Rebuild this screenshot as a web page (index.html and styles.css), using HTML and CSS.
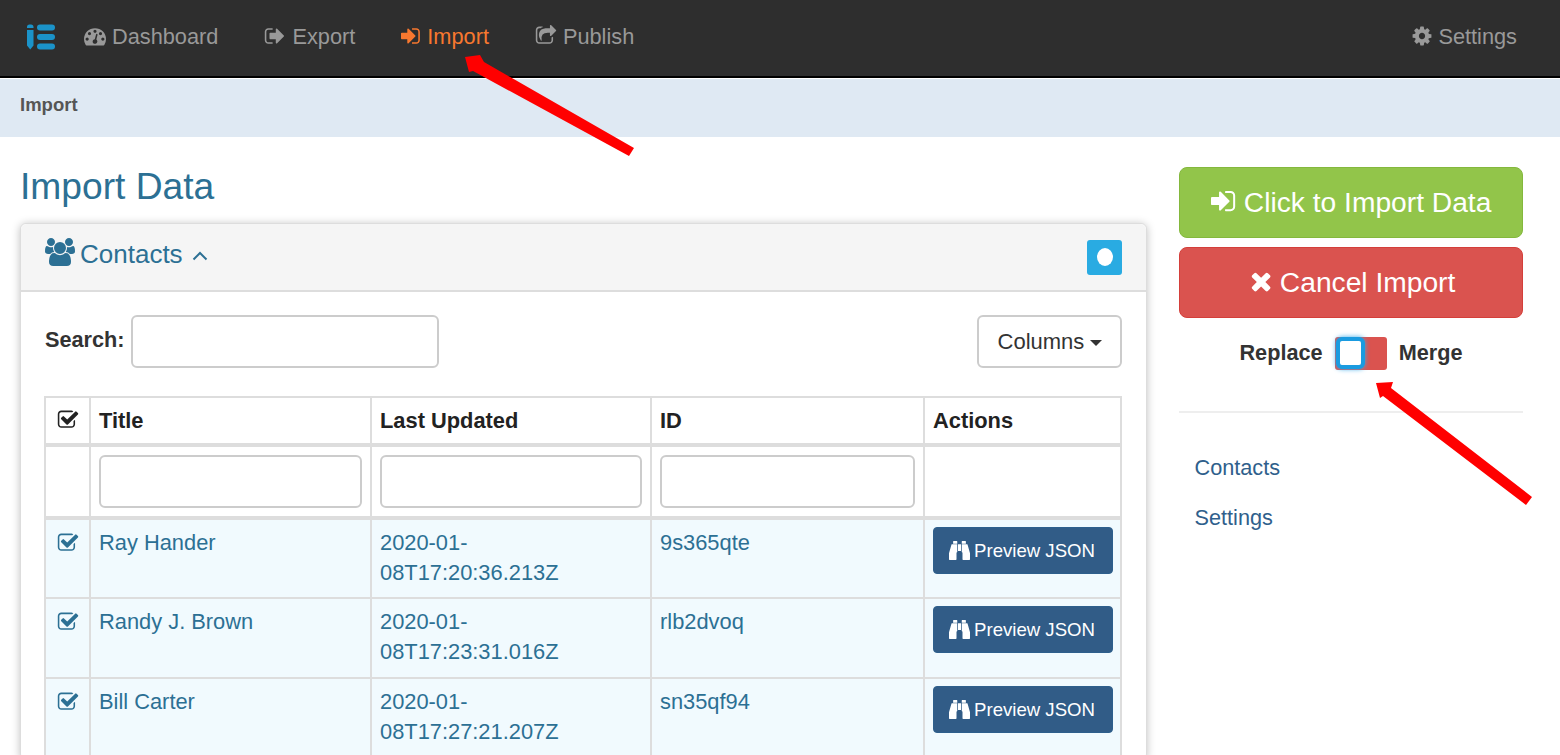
FILE: index.html
```html
<!DOCTYPE html>
<html lang="en">
<head>
  <meta charset="utf-8">
  <title>Import Data</title>
  <link rel="stylesheet" href="styles.css">
</head>
<body>
  <svg class="sprite" xmlns="http://www.w3.org/2000/svg">
    <symbol id="i-in" viewBox="0 0 1792 1792"><path d="M1184 896q0 26-19 45l-544 544q-19 19-45 19t-45-19-19-45v-288h-448q-26 0-45-19t-19-45v-384q0-26 19-45t45-19h448v-288q0-26 19-45t45-19 45 19l544 544q19 19 19 45zm352-352v704q0 119-84.5 203.5t-203.5 84.5h-320q-13 0-22.5-9.5t-9.5-22.5q0-4-1-20t-.5-26.5 3-23.5 10-19.5 20.5-6.5h320q66 0 113-47t47-113v-704q0-66-47-113t-113-47h-312l-11.5-1-11.5-3-8-5.5-7-9-2-13.5q0-4-1-20t-.5-26.5 3-23.5 10-19.5 20.5-6.5h320q119 0 203.5 84.5t84.5 203.5z"/></symbol>
    <symbol id="i-out" viewBox="0 0 1792 1792"><path d="M704 1440q0 4 1 20t.5 26.5-3 23.5-10 19.5-20.5 6.5h-320q-119 0-203.5-84.5t-84.5-203.5v-704q0-119 84.5-203.5t203.5-84.5h320q13 0 22.5 9.5t9.5 22.5q0 4 1 20t.5 26.5-3 23.5-10 19.5-20.5 6.5h-320q-66 0-113 47t-47 113v704q0 66 47 113t113 47h312l11.5 1 11.5 3 8 5.5 7 9 2 13.5zm928-544q0 26-19 45l-544 544q-19 19-45 19t-45-19-19-45v-288h-448q-26 0-45-19t-19-45v-384q0-26 19-45t45-19h448v-288q0-26 19-45t45-19 45 19l544 544q19 19 19 45z"/></symbol>
    <symbol id="i-cog" viewBox="0 0 1792 1792"><path d="M1152 896q0-106-75-181t-181-75-181 75-75 181 75 181 181 75 181-75 75-181zm512-109v222q0 12-8 23t-20 13l-185 28q-19 54-39 91 35 50 107 138 10 12 10 25t-9 23q-27 37-99 108t-94 71q-12 0-26-9l-138-108q-44 23-91 38-16 136-29 186-7 28-36 28h-222q-14 0-24.5-8.5t-11.5-21.5l-28-184q-49-16-90-37l-141 107q-10 9-25 9-14 0-25-11-126-114-165-168-7-10-7-23 0-12 8-23 15-21 51-66.5t54-70.5q-27-50-41-99l-183-27q-13-2-21-12.5t-8-23.5v-222q0-12 8-23t19-13l186-28q14-46 39-92-40-57-107-138-10-12-10-24 0-10 9-23 26-36 98.5-107.5t94.5-71.5q13 0 26 10l138 107q44-23 91-38 16-136 29-186 7-28 36-28h222q14 0 24.5 8.5t11.5 21.5l28 184q49 16 90 37l142-107q9-9 24-9 13 0 25 10 129 119 165 170 7 8 7 22 0 12-8 23-15 21-51 66.5t-54 70.5q26 50 41 98l183 28q13 2 21 12.5t8 23.5z"/></symbol>
    <symbol id="i-times" viewBox="0 0 1792 1792"><path d="M1490 1322q0 40-28 68l-136 136q-28 28-68 28t-68-28l-294-294-294 294q-28 28-68 28t-68-28l-136-136q-28-28-28-68t28-68l294-294-294-294q-28-28-28-68t28-68l136-136q28-28 68-28t68 28l294 294 294-294q28-28 68-28t68 28l136 136q28 28 28 68t-28 68l-294 294 294 294q28 28 28 68z"/></symbol>
    <symbol id="i-check" viewBox="0 0 1792 1792"><path d="M1472 930v318q0 119-84.5 203.5t-203.5 84.5h-832q-119 0-203.5-84.5t-84.5-203.5v-832q0-119 84.5-203.5t203.5-84.5h832q63 0 117 25 15 7 18 23 3 17-9 29l-49 49q-10 10-23 10-3 0-9-2-23-6-45-6h-832q-66 0-113 47t-47 113v832q0 66 47 113t113 47h832q66 0 113-47t47-113v-254q0-13 9-22l64-64q10-10 23-10 6 0 12 3 20 8 20 29zm231-489l-814 814q-24 24-57 24t-57-24l-430-430q-24-24-24-57t24-57l110-110q24-24 57-24t57 24l263 263 647-647q24-24 57-24t57 24l110 110q24 24 24 57t-24 57z"/></symbol>
    <symbol id="i-users" viewBox="0 0 1920 1792"><path d="M593 896q-162 5-265 128h-134q-82 0-138-40.5t-56-118.5q0-353 124-353 6 0 43.5 21t97.5 42.5 119 21.5q67 0 133-23-5 37-5 66 0 139 81 256zm1071 637q0 120-73 189.5t-194 69.5h-874q-121 0-194-69.5t-73-189.5q0-53 3.5-103.5t14-109 26.5-108.5 43-97.5 62-81 85.5-53.5 111.5-20q10 0 43 21.5t73 48 107 48 135 21.5 135-21.5 107-48 73-48 43-21.5q61 0 111.5 20t85.5 53.5 62 81 43 97.5 26.5 108.5 14 109 3.5 103.5zm-1024-1277q0 106-75 181t-181 75-181-75-75-181 75-181 181-75 181 75 75 181zm704 384q0 159-112.5 271.5t-271.5 112.5-271.5-112.5-112.5-271.5 112.5-271.5 271.5-112.5 271.5 112.5 112.5 271.5zm576 225q0 78-56 118.5t-138 40.5h-134q-103-123-265-128 81-117 81-256 0-29-5-66 66 23 133 23 59 0 119-21.5t97.5-42.5 43.5-21q124 0 124 353zm-128-609q0 106-75 181t-181 75-181-75-75-181 75-181 181-75 181 75 75 181z"/></symbol>
    <symbol id="i-gauge" viewBox="0 0 1792 1792"><path d="M384 1152q0-53-37.5-90.5t-90.5-37.5-90.5 37.5-37.5 90.5 37.5 90.5 90.5 37.5 90.5-37.5 37.5-90.5zm192-448q0-53-37.5-90.5t-90.5-37.5-90.5 37.5-37.5 90.5 37.5 90.5 90.5 37.5 90.5-37.5 37.5-90.5zm428 481l101-382q6-26-7.5-48.5t-38.5-29.5-48 6.5-30 39.5l-101 382q-60 5-107 43.5t-63 98.5q-20 77 20 146t117 89 146-20 89-117q16-60-6-117t-72-91zm660-33q0-53-37.5-90.5t-90.5-37.5-90.5 37.5-37.5 90.5 37.5 90.5 90.5 37.5 90.5-37.5 37.5-90.5zm-640-640q0-53-37.5-90.5t-90.5-37.5-90.5 37.5-37.5 90.5 37.5 90.5 90.5 37.5 90.5-37.5 37.5-90.5zm448 192q0-53-37.5-90.5t-90.5-37.5-90.5 37.5-37.5 90.5 37.5 90.5 90.5 37.5 90.5-37.5 37.5-90.5zm320 448q0 261-141 483-19 29-54 29h-1402q-35 0-54-29-141-221-141-483 0-182 71-348t191-286 286-191 348-71 348 71 286 191 191 286 71 348z"/></symbol>
    <symbol id="i-share" viewBox="0 0 1792 1792"><path d="M1472 989v259q0 119-84.5 203.5t-203.5 84.5h-832q-119 0-203.5-84.5t-84.5-203.5v-832q0-119 84.5-203.5t203.5-84.5h255q13 0 22.5 9.5t9.5 22.5q0 27-26 32-77 26-133 60-10 4-16 4h-112q-66 0-113 47t-47 113v832q0 66 47 113t113 47h832q66 0 113-47t47-113v-214q0-19 18-29 28-13 54-37 16-16 35-8 21 9 21 29zm237-496l-384 384q-18 19-45 19-12 0-25-5-39-17-39-59v-192h-160q-323 0-438 131-119 137-74 473 3 23-20 34-8 2-12 2-16 0-26-13-10-14-21-31t-39.5-68.5-49.5-99.5-38.5-114-17.5-122q0-49 3.5-91t14-90 28-88 47-81.5 68.5-74 94.5-61.5 124.5-48.5 159.5-30.5 196.5-11h160v-192q0-42 39-59 13-5 25-5 26 0 45 19l384 384q19 19 19 45t-19 45z"/></symbol>
    <symbol id="i-bino" viewBox="0 0 1792 1792"><path d="M704 448v640q0 26-19 45t-45 19v576q0 26-19 45t-45 19h-512q-26 0-45-19t-19-45v-512l212-745q7-23 31-23h461zM768 448h256v576h-256zM1088 448v640q0 26 19 45t45 19v576q0 26 19 45t45 19h512q26 0 45-19t19-45v-512l-212-745q-7-23-31-23h-461zM704 208v192h-352v-192q0-14 9-23t23-9h288q14 0 23 9t9 23zM1440 208v192h-352v-192q0-14 9-23t23-9h288q14 0 23 9t9 23z"/></symbol>
  </svg>

  <nav class="topbar">
    <svg class="logo" viewBox="0 0 30 26">
      <path d="M1 3q0-2.500 2.500-2.500h1.500q2.500 0 2.500 2.500v1h-6.500zM1 6h6.500v15.500l-3.250 4-3.250-4z"/>
      <rect x="11" y="0.500" width="18" height="6" rx="3"/>
      <rect x="11" y="10" width="18" height="6" rx="3"/>
      <rect x="11" y="19.500" width="18" height="6" rx="3"/>
    </svg>
    <a class="nav-link" href="#"><svg class="icon"><use href="#i-gauge"/></svg>Dashboard</a>
    <a class="nav-link" href="#"><svg class="icon"><use href="#i-out"/></svg>Export</a>
    <a class="nav-link active" href="#"><svg class="icon"><use href="#i-in"/></svg>Import</a>
    <a class="nav-link" href="#"><svg class="icon"><use href="#i-share"/></svg>Publish</a>
    <a class="nav-link nav-right" href="#"><svg class="icon"><use href="#i-cog"/></svg>Settings</a>
  </nav>
  <div class="crumb">Import</div>

  <div class="page">
    <main>
      <h1>Import Data</h1>
      <section class="panel">
        <div class="panel-head">
          <h2><svg class="icon icon-users"><use href="#i-users"/></svg>Contacts<svg class="chevron" viewBox="0 0 16 10"><path d="M1.500 8.500 8 2l6.500 6.500"/></svg></h2>
          <button class="toggle-dot"><span></span></button>
        </div>
        <div class="panel-body">
          <div class="tools">
            <label class="search">Search: <input type="text"></label>
            <button class="btn-columns">Columns <span class="caret"></span></button>
          </div>
          <table>
            <colgroup>
              <col class="c-check"><col class="c-title"><col class="c-date"><col class="c-id"><col>
            </colgroup>
            <thead>
              <tr>
                <th class="cell-check"><svg class="icon icon-check"><use href="#i-check"/></svg></th>
                <th>Title</th><th>Last Updated</th><th>ID</th><th>Actions</th>
              </tr>
              <tr class="filters">
                <td></td>
                <td><input type="text"></td>
                <td><input type="text"></td>
                <td><input type="text"></td>
                <td></td>
              </tr>
            </thead>
            <tbody>
              <tr>
                <td class="cell-check"><svg class="icon icon-check"><use href="#i-check"/></svg></td>
                <td>Ray Hander</td>
                <td class="cell-date">2020-01-08T17:20:36.213Z</td>
                <td>9s365qte</td>
                <td class="cell-action"><button class="btn-preview"><svg class="icon"><use href="#i-bino"/></svg>Preview JSON</button></td>
              </tr>
              <tr>
                <td class="cell-check"><svg class="icon icon-check"><use href="#i-check"/></svg></td>
                <td>Randy J. Brown</td>
                <td class="cell-date">2020-01-08T17:23:31.016Z</td>
                <td>rlb2dvoq</td>
                <td class="cell-action"><button class="btn-preview"><svg class="icon"><use href="#i-bino"/></svg>Preview JSON</button></td>
              </tr>
              <tr>
                <td class="cell-check"><svg class="icon icon-check"><use href="#i-check"/></svg></td>
                <td>Bill Carter</td>
                <td class="cell-date">2020-01-08T17:27:21.207Z</td>
                <td>sn35qf94</td>
                <td class="cell-action"><button class="btn-preview"><svg class="icon"><use href="#i-bino"/></svg>Preview JSON</button></td>
              </tr>
            </tbody>
          </table>
        </div>
      </section>
    </main>

    <aside>
      <button class="btn-big btn-green"><svg class="icon"><use href="#i-in"/></svg>Click to Import Data</button>
      <button class="btn-big btn-red"><svg class="icon"><use href="#i-times"/></svg>Cancel Import</button>
      <div class="mode">
        <b>Replace</b>
        <span class="switch"><span class="knob"></span></span>
        <b>Merge</b>
      </div>
      <hr>
      <ul class="side-links">
        <li><a href="#">Contacts</a></li>
        <li><a href="#">Settings</a></li>
      </ul>
    </aside>
  </div>

  <svg class="arrows" viewBox="0 0 1560 755">
    <path d="M465 57 480 55 484 62 634 148 629 156 473 71 469 72z"/>
    <path d="M1376 383 1393 382 1391 388 1532 497 1526 505 1383 396 1380 398z"/>
  </svg>
</body>
</html>
```

FILE: styles.css
```css
html { overflow: hidden; }
body { margin: 0; height: 755px; overflow: hidden; position: relative; font-family: "Liberation Sans", Arial, sans-serif; font-size: 21.7px; line-height: 30px; color: #333; background: #fff; }
.sprite { display: none; }
.icon { width: 1em; height: 1em; fill: currentColor; vertical-align: -2px; }
a { text-decoration: none; color: inherit; }
button { font-family: inherit; cursor: pointer; }

.topbar { display: flex; align-items: center; height: 74px; padding: 0 43px 2px 26px; background: #2e2e2e; border-bottom: 2px solid #000; box-shadow: 0 1px 0 #fff; }
.logo { width: 30px; height: 26px; fill: #1b93c9; margin-right: 28px; }
.nav-link { color: #999; font-size: 21.75px; margin-right: 46px; white-space: nowrap; }
.nav-link .icon { margin-right: 6px; width: 22px; height: 22px; vertical-align: -3px; }
.nav-link.active { color: #f8782f; }
.nav-link.active .icon { margin-right: 4px; }
.nav-right { margin-left: auto; margin-right: 0; }
.nav-right .icon { margin-right: 5px; }

.crumb { margin-top: 1px; height: 58px; line-height: 52px; padding-left: 20px; background: #dfe9f3; font-size: 18.5px; font-weight: bold; color: #555; }

.page { display: flex; gap: 32px; padding: 0 37px 0 20px; }
main { width: 1127px; flex: none; }
aside { flex: 1; padding-top: 30px; }

h1 { margin: 27px 0 15px; font-size: 37.2px; line-height: 44px; font-weight: normal; color: #2c7094; }

.panel { border: 1px solid #ddd; border-radius: 6px; box-shadow: 0 1px 8px rgba(0,0,0,.25); background: #fff; }
.panel-head { display: flex; justify-content: space-between; align-items: center; height: 66px; padding: 0 24px; background: #f5f5f5; border-bottom: 2px solid #ddd; border-radius: 6px 6px 0 0; }
.panel-head h2 { margin: 0 0 9px; font-size: 26px; font-weight: normal; color: #2c7094; }
.icon-users { width: 30px; height: 30px; margin-right: 5px; vertical-align: -4px; }
.chevron { width: 16px; height: 10px; margin-left: 9px; fill: none; stroke: currentColor; stroke-width: 2; vertical-align: 2px; }
.toggle-dot { display: flex; align-items: center; justify-content: center; width: 35px; height: 35px; padding: 0; border: 0; border-radius: 3px; background: #29abe2; }
.toggle-dot span { width: 16px; height: 18px; border-radius: 50%; background: #fff; }

.panel-body { padding: 23px 24px 0; }
.tools { display: flex; justify-content: space-between; margin-bottom: 28px; }
.search { font-weight: bold; color: #333; }
input { height: 53px; box-sizing: border-box; border: 2px solid #ccc; border-radius: 6px; background: #fff; }
.search input { width: 308px; margin-left: 0; vertical-align: middle; }
.btn-columns { width: 145px; height: 53px; padding: 0 0 0 1px; border: 2px solid #ccc; border-radius: 6px; background: #fff; color: #333; font-size: 22px; }
.caret { display: inline-block; width: 0; height: 0; vertical-align: 3px; border: 6.500px solid transparent; border-top-color: #333; border-bottom: 0; }

table { width: 1078px; margin-left: -1px; table-layout: fixed; border-collapse: collapse; font-size: 21.85px; }
.c-check { width: 45px; }
.c-title { width: 281px; }
.c-date { width: 280px; }
.c-id { width: 273px; }
th, td { padding: 8px; border: 2px solid #ddd; text-align: left; vertical-align: top; }
th { padding-bottom: 7px; font-weight: bold; color: #222; border-bottom-width: 4px; }
.filters td { padding: 8px; border-bottom-width: 4px; }
.filters input { width: 100%; display: block; }
tbody tr { height: 80px; background: #f1fafe; color: #2c7094; }
td.cell-date { padding-right: 12px; }
td.cell-action { padding-top: 7px; }
.cell-check { text-align: center; padding: 8px 0; }
th.cell-check { padding-bottom: 0; }
.icon-check { width: 22px; height: 22px; vertical-align: -4px; }
th .icon-check { color: #222; vertical-align: -3px; }

.btn-preview { display: block; width: 180px; height: 47px; padding: 0 2px 0 0; border: 1px solid #2e5f8c; border-radius: 4px; background: #315c87; color: #fff; font-size: 18.6px; }
.btn-preview .icon { width: 21px; height: 21px; margin-right: 4px; vertical-align: -3px; }

.btn-big { display: block; width: 100%; height: 71px; margin-bottom: 9px; border-radius: 8px; color: #fff; font-size: 28.2px; }
.btn-big .icon { margin-right: 5px; vertical-align: -3px; }
.btn-green { background: #92c54a; border: 1px solid #84b83d; }
.btn-red { background: #da534f; border: 1px solid #d43f3a; }
.mode { display: flex; justify-content: center; align-items: center; gap: 12px; margin-top: 18px; height: 34px; }
.switch { width: 52px; height: 33px; border-radius: 3px; background: #da534f; }
.knob { display: block; width: 29px; height: 32px; margin-left: 1px; box-sizing: border-box; border: 4px solid #1a9be0; border-radius: 6px; background: #fff; box-shadow: 0 0 5px #39a9e8; }
aside hr { margin: 41px 0 40px; border: 0; border-top: 2px solid #eee; }
.side-links { list-style: none; margin: 0; padding: 0 15.500px; color: #2f5f8c; }
.side-links li { margin-bottom: 20px; }

.arrows { position: absolute; left: 0; top: 0; width: 1560px; height: 755px; pointer-events: none; fill: #f00; }
```
